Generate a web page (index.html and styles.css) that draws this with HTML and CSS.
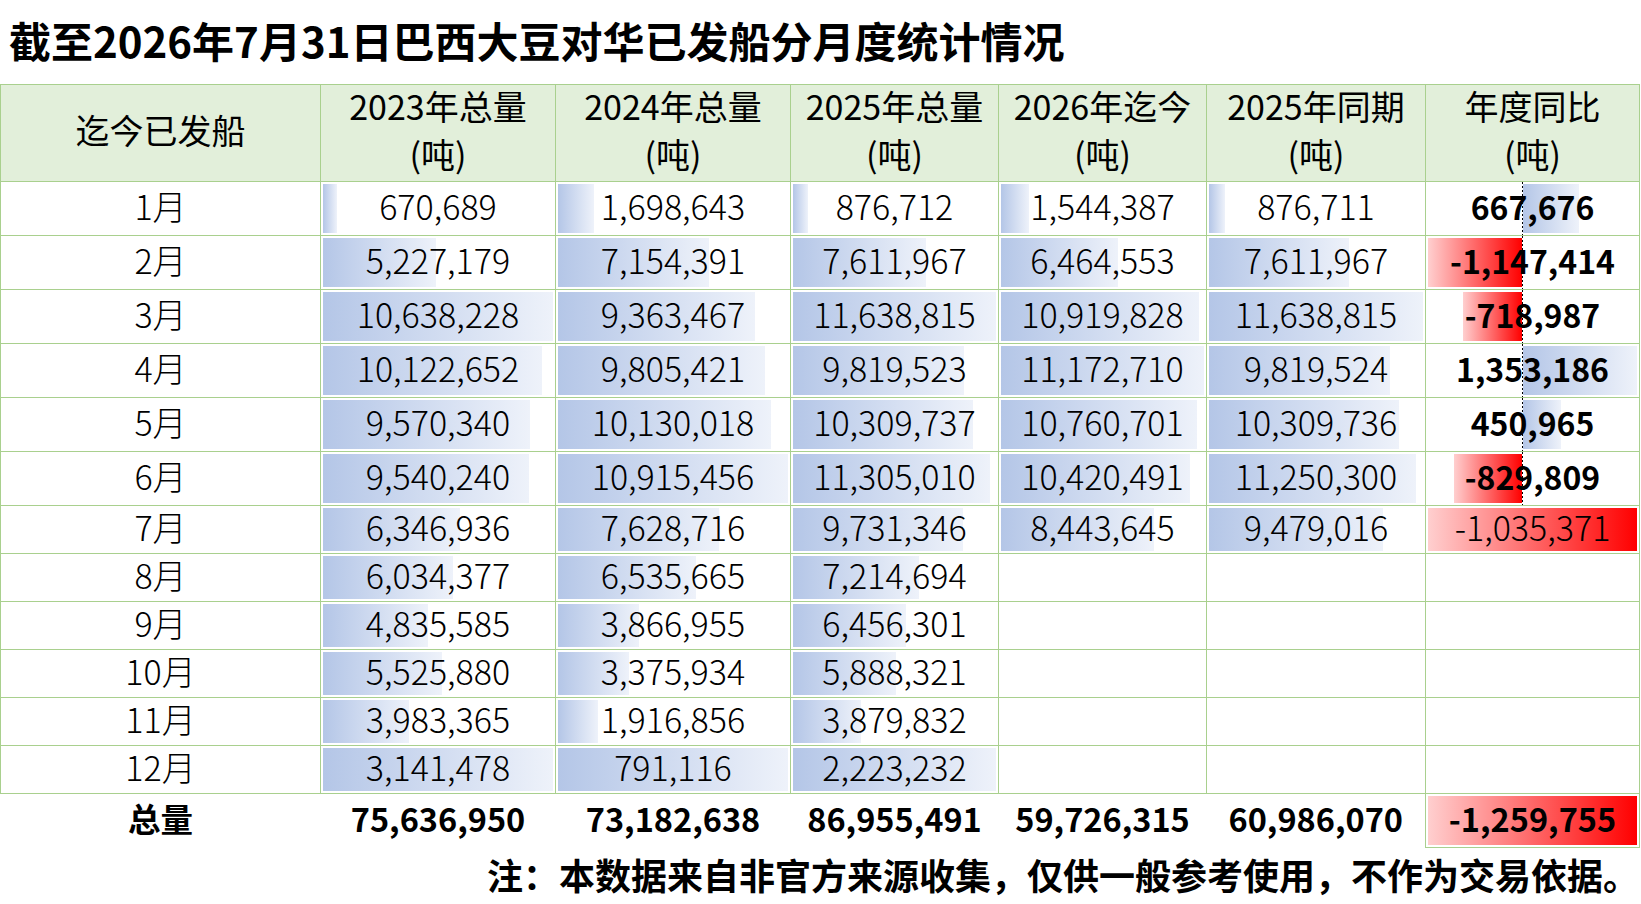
FILE: index.html
```html
<!DOCTYPE html>
<html lang="zh-CN">
<head>
<meta charset="utf-8">
<title>巴西大豆对华已发船分月度统计</title>
<link rel="stylesheet" href="styles.css">
</head>
<body>
<div class="page">
  <h1 class="title">截至2026年7月31日巴西大豆对华已发船分月度统计情况</h1>
  <table class="sheet">
    <colgroup>
      <col class="c-month"><col class="c-y"><col class="c-y"><col class="c-m"><col class="c-m"><col class="c-s"><col class="c-r">
    </colgroup>
    <thead>
      <tr>
        <th><span class="h">迄今已发船</span></th>
        <th><span class="h">2023年总量<br>(吨)</span></th>
        <th><span class="h">2024年总量<br>(吨)</span></th>
        <th><span class="h">2025年总量<br>(吨)</span></th>
        <th><span class="h">2026年迄今<br>(吨)</span></th>
        <th><span class="h">2025年同期<br>(吨)</span></th>
        <th><span class="h">年度同比<br>(吨)</span></th>
      </tr>
    </thead>
    <tbody>
      <tr class="tall">
        <td>1月</td>
        <td class="n"><span class="bar" style="--p:.0630"></span><span class="v">670,689</span></td>
        <td class="n"><span class="bar" style="--p:.1556"></span><span class="v">1,698,643</span></td>
        <td class="n"><span class="bar" style="--p:.0753"></span><span class="v">876,712</span></td>
        <td class="n"><span class="bar" style="--p:.1382"></span><span class="v">1,544,387</span></td>
        <td class="n"><span class="bar" style="--p:.0753"></span><span class="v">876,711</span></td>
        <td class="n yoy"><span class="pos" style="--p:.4934"></span><span class="axis"></span><span class="v">667,676</span></td>
      </tr>
      <tr class="tall">
        <td>2月</td>
        <td class="n"><span class="bar" style="--p:.4914"></span><span class="v">5,227,179</span></td>
        <td class="n"><span class="bar" style="--p:.6554"></span><span class="v">7,154,391</span></td>
        <td class="n"><span class="bar" style="--p:.6540"></span><span class="v">7,611,967</span></td>
        <td class="n"><span class="bar" style="--p:.5786"></span><span class="v">6,464,553</span></td>
        <td class="n"><span class="bar" style="--p:.6540"></span><span class="v">7,611,967</span></td>
        <td class="n yoy"><span class="neg" style="--p:1"></span><span class="axis"></span><span class="v">-1,147,414</span></td>
      </tr>
      <tr class="tall">
        <td>3月</td>
        <td class="n"><span class="bar" style="--p:1"></span><span class="v">10,638,228</span></td>
        <td class="n"><span class="bar" style="--p:.8578"></span><span class="v">9,363,467</span></td>
        <td class="n"><span class="bar" style="--p:1"></span><span class="v">11,638,815</span></td>
        <td class="n"><span class="bar" style="--p:.9774"></span><span class="v">10,919,828</span></td>
        <td class="n"><span class="bar" style="--p:1"></span><span class="v">11,638,815</span></td>
        <td class="n yoy"><span class="neg" style="--p:.6266"></span><span class="axis"></span><span class="v">-718,987</span></td>
      </tr>
      <tr class="tall">
        <td>4月</td>
        <td class="n"><span class="bar" style="--p:.9515"></span><span class="v">10,122,652</span></td>
        <td class="n"><span class="bar" style="--p:.8983"></span><span class="v">9,805,421</span></td>
        <td class="n"><span class="bar" style="--p:.8437"></span><span class="v">9,819,523</span></td>
        <td class="n"><span class="bar" style="--p:1"></span><span class="v">11,172,710</span></td>
        <td class="n"><span class="bar" style="--p:.8437"></span><span class="v">9,819,524</span></td>
        <td class="n yoy"><span class="pos" style="--p:1"></span><span class="axis"></span><span class="v">1,353,186</span></td>
      </tr>
      <tr class="tall">
        <td>5月</td>
        <td class="n"><span class="bar" style="--p:.8996"></span><span class="v">9,570,340</span></td>
        <td class="n"><span class="bar" style="--p:.9280"></span><span class="v">10,130,018</span></td>
        <td class="n"><span class="bar" style="--p:.8858"></span><span class="v">10,309,737</span></td>
        <td class="n"><span class="bar" style="--p:.9631"></span><span class="v">10,760,701</span></td>
        <td class="n"><span class="bar" style="--p:.8858"></span><span class="v">10,309,736</span></td>
        <td class="n yoy"><span class="pos" style="--p:.3333"></span><span class="axis"></span><span class="v">450,965</span></td>
      </tr>
      <tr class="tall">
        <td>6月</td>
        <td class="n"><span class="bar" style="--p:.8968"></span><span class="v">9,540,240</span></td>
        <td class="n"><span class="bar" style="--p:1"></span><span class="v">10,915,456</span></td>
        <td class="n"><span class="bar" style="--p:.9713"></span><span class="v">11,305,010</span></td>
        <td class="n"><span class="bar" style="--p:.9327"></span><span class="v">10,420,491</span></td>
        <td class="n"><span class="bar" style="--p:.9666"></span><span class="v">11,250,300</span></td>
        <td class="n yoy"><span class="neg" style="--p:.7232"></span><span class="axis"></span><span class="v">-829,809</span></td>
      </tr>
      <tr class="short">
        <td>7月</td>
        <td class="n"><span class="bar" style="--p:.5966"></span><span class="v">6,346,936</span></td>
        <td class="n"><span class="bar" style="--p:.6989"></span><span class="v">7,628,716</span></td>
        <td class="n"><span class="bar" style="--p:.8361"></span><span class="v">9,731,346</span></td>
        <td class="n"><span class="bar" style="--p:.7557"></span><span class="v">8,443,645</span></td>
        <td class="n"><span class="bar" style="--p:.8144"></span><span class="v">9,479,016</span></td>
        <td class="n"><span class="redfill"></span><span class="v">-1,035,371</span></td>
      </tr>
      <tr class="short">
        <td>8月</td>
        <td class="n"><span class="bar" style="--p:.5672"></span><span class="v">6,034,377</span></td>
        <td class="n"><span class="bar" style="--p:.5988"></span><span class="v">6,535,665</span></td>
        <td class="n"><span class="bar" style="--p:.6199"></span><span class="v">7,214,694</span></td>
        <td></td><td></td><td></td>
      </tr>
      <tr class="short">
        <td>9月</td>
        <td class="n"><span class="bar" style="--p:.4545"></span><span class="v">4,835,585</span></td>
        <td class="n"><span class="bar" style="--p:.3543"></span><span class="v">3,866,955</span></td>
        <td class="n"><span class="bar" style="--p:.5547"></span><span class="v">6,456,301</span></td>
        <td></td><td></td><td></td>
      </tr>
      <tr class="short">
        <td>10月</td>
        <td class="n"><span class="bar" style="--p:.5194"></span><span class="v">5,525,880</span></td>
        <td class="n"><span class="bar" style="--p:.3093"></span><span class="v">3,375,934</span></td>
        <td class="n"><span class="bar" style="--p:.5059"></span><span class="v">5,888,321</span></td>
        <td></td><td></td><td></td>
      </tr>
      <tr class="short">
        <td>11月</td>
        <td class="n"><span class="bar" style="--p:.3744"></span><span class="v">3,983,365</span></td>
        <td class="n"><span class="bar" style="--p:.1756"></span><span class="v">1,916,856</span></td>
        <td class="n"><span class="bar" style="--p:.3334"></span><span class="v">3,879,832</span></td>
        <td></td><td></td><td></td>
      </tr>
      <tr class="short">
        <td>12月</td>
        <td class="n"><span class="bar" style="--p:1"></span><span class="v">3,141,478</span></td>
        <td class="n"><span class="bar" style="--p:1"></span><span class="v">791,116</span></td>
        <td class="n"><span class="bar" style="--p:1"></span><span class="v">2,223,232</span></td>
        <td></td><td></td><td></td>
      </tr>
    </tbody>
    <tfoot>
      <tr>
        <td>总量</td>
        <td>75,636,950</td>
        <td>73,182,638</td>
        <td>86,955,491</td>
        <td>59,726,315</td>
        <td>60,986,070</td>
        <td class="n total-yoy"><span class="redfill"></span><span class="v">-1,259,755</span></td>
      </tr>
    </tfoot>
  </table>
  <p class="note">注：本数据来自非官方来源收集，仅供一般参考使用，不作为交易依据。</p>
</div>
</body>
</html>
```
FILE: styles.css
```css
* { box-sizing: border-box; }

body {
  margin: 0;
  background: #ffffff;
  color: #000000;
  font-family: "Noto Sans CJK SC", "Noto Sans", sans-serif;
}

.page {
  width: 1641px;
}

.title {
  margin: 0;
  height: 84px;
  padding-left: 9px;
  font-size: 42px;
  font-weight: 700;
  line-height: 80px;
  white-space: nowrap;
}

.sheet {
  border-collapse: collapse;
  table-layout: fixed;
  width: 1639px;
}

.c-month { width: 320px; }
.c-y { width: 235px; }
.c-m { width: 208px; }
.c-s { width: 219px; }
.c-r { width: 214px; }

.sheet th,
.sheet td {
  border: 1px solid #a9d08e;
  padding: 0;
  text-align: center;
  vertical-align: middle;
  white-space: nowrap;
}

.sheet thead th {
  height: 96px;
  background: #e2efda;
  font-size: 34px;
  font-weight: 400;
  line-height: 48px;
}

.h {
  position: relative;
  top: -3px;
}

.sheet tbody td {
  font-size: 34px;
  font-weight: 300;
  line-height: 1;
  padding-bottom: 5px;
}

.sheet tr.tall { height: 54px; }
.sheet tr.short { height: 48px; }

.n { position: relative; }

.v { position: relative; }

.bar {
  position: absolute;
  left: 2px;
  top: 2px;
  bottom: 2px;
  width: calc((100% - 4px) * var(--p));
  background: linear-gradient(to right, #b4c6e7, #eef2fa);
}

.sheet tbody td.yoy {
  font-size: 32px;
  font-weight: 700;
}

.axis {
  position: absolute;
  left: 96px;
  top: 0;
  bottom: 0;
  width: 1px;
  background: repeating-linear-gradient(to bottom, #000 0 2px, transparent 2px 4px);
}

.pos {
  position: absolute;
  left: 97px;
  top: 2px;
  bottom: 2px;
  width: calc((100% - 99px) * var(--p));
  background: linear-gradient(to right, #b4c6e7, #eef2fa);
}

.neg {
  position: absolute;
  right: calc(100% - 96px);
  top: 2px;
  bottom: 2px;
  width: calc(94px * var(--p));
  background: linear-gradient(to right, #ffcfcf, #ff0000);
}

.redfill {
  position: absolute;
  left: 2px;
  right: 2px;
  top: 2px;
  bottom: 2px;
  background: linear-gradient(to right, #ffcfcf, #ff0000);
}

.sheet tfoot td {
  height: 54px;
  border: none;
  font-size: 32.5px;
  font-weight: 700;
  line-height: 1;
  padding-bottom: 5px;
}

.sheet tfoot td.total-yoy {
  border: 1px solid #a9d08e;
}

.note {
  margin: 0;
  width: 1639px;
  text-align: right;
  font-size: 36px;
  font-weight: 700;
  line-height: 52px;
  white-space: nowrap;
}
```
